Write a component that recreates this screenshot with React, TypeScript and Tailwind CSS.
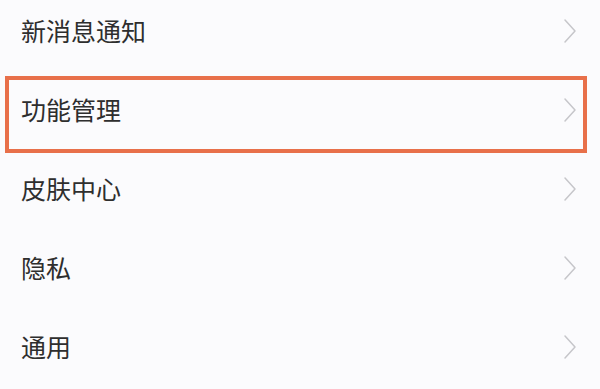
const items = ["新消息通知", "功能管理", "皮肤中心", "隐私", "通用"];

function Chevron() {
  return (
    <svg width="16" height="26" viewBox="0 0 16 26" fill="none" className="shrink-0">
      <path d="M3 2 L13 13 L3 24" stroke="#c6c6ca" strokeWidth="1.5" strokeLinecap="round" strokeLinejoin="round" />
    </svg>
  );
}

export default function App() {
  return (
    <div
      className="w-[600px] h-[389px] overflow-hidden bg-[#fbfbfd]"
      style={{ fontFamily: '"Noto Sans CJK SC", "Noto Sans", sans-serif' }}
    >
      <div className="-mt-[9px] flex flex-col">
        {items.map((label, i) => (
          <div key={label} className="relative h-[79px] flex items-center justify-between pl-[21px] pr-[22px]">
            <span className="text-[25px] leading-none text-[#2e2e2e]">{label}</span>
            <Chevron />
            {i === 1 && (
              <div className="absolute left-[5px] top-[6px] w-[582px] h-[77px] border-[4px] border-[#e8704a]" />
            )}
          </div>
        ))}
      </div>
    </div>
  );
}
